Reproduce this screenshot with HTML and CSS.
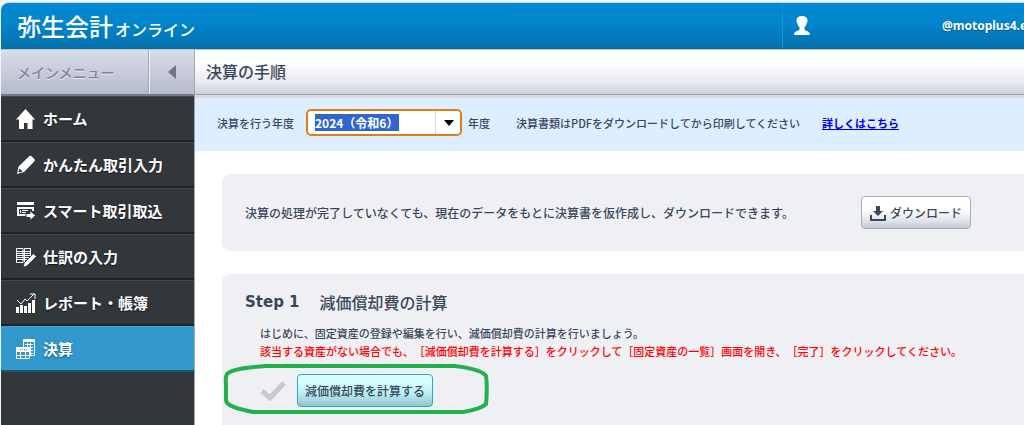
FILE: index.html
```html
<!DOCTYPE html>
<html lang="ja">
<head>
    <meta charset="utf-8">
    <title>弥生会計オンライン</title>
    <link rel="stylesheet" href="styles.css">
</head>
<body>
    <div class="page">
        <header class="header">
            <a href="#" class="logo">弥生会計<span>オンライン</span></a>
            <div class="user">
                <svg class="user-icon" width="16" height="20" viewBox="0 0 16 20">
                    <path d="M8 0c3.500 0 5.500 1.500 5.500 4.500 0 1.500-.2 2-.8 2.500-.2 2-1.200 3.300-2.200 4.300v2.200c.5 1.500 5.500 1.300 5.500 5.500H0c0-4.200 5-4 5.500-5.500v-2.200C4.300 10.300 3.500 9 3.300 7c-.6-.5-.8-1-.8-2.500C2.500 1.500 4.500 0 8 0z" fill="#fff"/>
                </svg>
                <span class="user-name">@motoplus4.e</span>
            </div>
        </header>

        <div class="main">
            <!-- サイドメニュー -->
            <aside class="sidebar">
                <div class="menu-head">
                    <span class="menu-title">メインメニュー</span>
                    <button type="button" class="menu-close" aria-label="メニューを閉じる">
                        <svg width="8" height="14" viewBox="0 0 8 14"><path d="M8 0v14L0 7z" fill="#6d788b"/></svg>
                    </button>
                </div>
                <nav class="menu">
                    <a href="#">
                        <svg width="20" height="20" viewBox="0 0 20 20" fill="#fff"><path d="M9.500 0L0 10.500h3V20h5v-6h3.500v6h5v-9.500H19z"/></svg>
                        ホーム
                    </a>
                    <a href="#">
                        <svg width="20" height="20" viewBox="0 0 20 20">
                            <path d="M1 19l1.500-7.500L13 1.500c1-1 2-.8 3 .2l2 2c1 1 1 2 0 3L8 17z" fill="#fff"/>
                            <path d="M3.500 13.500l3 3-3.300 1-.8-.8z" fill="#32373b"/>
                        </svg>
                        かんたん取引入力
                    </a>
                    <a href="#">
                        <svg width="20" height="20" viewBox="0 0 20 20">
                            <path d="M1 1h17v3H1z" fill="#fff"/>
                            <path d="M17 10V7H2v7h9" fill="none" stroke="#fff" stroke-width="2"/>
                            <path d="M4 9h1v3H4zM6 9h6v1H6zM6 11h4v1H6z" fill="#fff"/>
                            <path d="M10 12.500h4V9.500l5.500 5-5.500 5v-3h-4z" fill="#fff" stroke="#32373b"/>
                        </svg>
                        スマート取引取込
                    </a>
                    <a href="#">
                        <svg width="20" height="20" viewBox="0 0 20 20">
                            <path d="M.5 1.500h6.500v14H.5zM8.500 1.500h6v14h-6z" fill="none" stroke="#fff"/>
                            <path d="M1 4.500h13M1 6.500h13M1 8.500h13M1 10.500h13M1 12.500h13" stroke="#fff"/>
                            <path d="M17.500 6.500l3 3L11 19l-4 1.500 1-4.500z" fill="#fff" stroke="#32373b"/>
                        </svg>
                        仕訳の入力
                    </a>
                    <a href="#">
                        <svg width="20" height="20" viewBox="0 0 20 20">
                            <path d="M0 14h3v6H0zM4 12h3v8H4zM8 13h3v7H8zM12 10h3v10h-3zM16 7h3v13h-3z" fill="#fff"/>
                            <path d="M1 7l4 4 4-5 2 2 7-7M14 1h5v5" fill="none" stroke="#fff"/>
                        </svg>
                        レポート・帳簿
                    </a>
                    <a href="#" class="active">
                        <svg width="20" height="20" viewBox="0 0 20 20">
                            <path d="M7.500.5h11v16h-11z" fill="#3398cc" stroke="#fff"/>
                            <path d="M8 1h10v2H8z" fill="#fff"/>
                            <path d="M9 5.500h8M9 8.500h8M9 11.500h8M9 14.500h8M11.500 4v12M14.500 4v12" stroke="#fff"/>
                            <path d="M.5 8.500h13v11H.5z" fill="#3398cc" stroke="#fff"/>
                            <path d="M0 8h14v5H0z" fill="#fff"/>
                            <path d="M4 10.500h1m1 0h1m1 0h1m1 0h1" stroke="#3398cc"/>
                            <path d="M1 16.500h12M4.500 13v6M9.500 13v6" stroke="#fff"/>
                        </svg>
                        決算
                    </a>
                </nav>
            </aside>

            <!-- コンテンツ -->
            <section class="content">
                <h1>決算の手順</h1>

                <div class="year-bar">
                    <label for="year">決算を行う年度</label>
                    <div class="select-wrap">
                        <select id="year">
                            <option>2024（令和6）</option>
                        </select>
                        <svg class="select-arrow" width="10" height="6" viewBox="0 0 10 6"><path d="M0 0h10L5 6z"/></svg>
                    </div>
                    <span>年度</span>
                    <p>決算書類はPDFをダウンロードしてから印刷してください</p>
                    <a href="#">詳しくはこちら</a>
                </div>

                <div class="card download">
                    <p>決算の処理が完了していなくても、現在のデータをもとに決算書を仮作成し、ダウンロードできます。</p>
                    <button type="button" class="btn">
                        <svg width="16" height="16" viewBox="0 0 16 16" fill="#3b475b"><path d="M6 1h4v5h3l-5 5-5-5h3zM0 10h2v4h12v-4h2v6H0z"/></svg>
                        ダウンロード
                    </button>
                </div>

                <div class="card step">
                    <h2><span>Step 1</span>減価償却費の計算</h2>
                    <p>はじめに、固定資産の登録や編集を行い、減価償却費の計算を行いましょう。</p>
                    <p class="notice">該当する資産がない場合でも、［減価償却費を計算する］をクリックして［固定資産の一覧］画面を開き、［完了］をクリックしてください。</p>
                    <div class="action">
                        <svg width="26" height="20" viewBox="0 0 26 20"><path d="M2 10l8 7L24 2" fill="none" stroke="#c9c9c9" stroke-width="5"/></svg>
                        <button type="button" class="btn btn-calc">減価償却費を計算する</button>
                        <svg class="marker" width="268" height="54" viewBox="0 0 268 54">
                            <path d="M44 4C26 5 8 8 5 12 3 15 4 18 4 24v14c0 6 12 9 27 12h210c12-2 20-5 23-8 1-8 1-22 0-28-3-5-15-8-31-10z" fill="none" stroke="#22b14c" stroke-width="4"/>
                        </svg>
                    </div>
                </div>
            </section>
        </div>
    </div>
</body>
</html>
```
FILE: styles.css
```css
* {
    box-sizing: border-box;
}

body {
    margin: 0;
    background-color: #f3f4f4;
    color: #3b475b;
    font-family: "Noto Sans CJK JP", sans-serif;
    font-size: 12px;
    font-weight: 500;
    line-height: 18px;
    text-spacing-trim: space-all; /* 全角の括弧を詰めない */
    overflow: hidden;
}

h1, h2, p {
    margin: 0;
}

.page {
    display: flex;
    flex-direction: column;
    min-height: 100vh;
    padding: 2px 0 0 1px;
}

/* ヘッダー */
.header {
    display: flex;
    height: 47px;
    border-top: 1px solid #c5d3dc;
    border-bottom: 1px solid #126496;
    border-radius: 8px 0 0 0;
    background: linear-gradient(#018ad3, #0383c9 50%, #0571ad);
}

.logo {
    flex: 1;
    padding-left: 16px;
    color: #fff;
    font-size: 24px;
    line-height: 46px;
    text-decoration: none;
}

.logo span {
    margin-left: 2px;
    font-size: 16px;
}

.user {
    display: flex;
    align-items: center;
    justify-content: space-between;
    width: 242px;
    padding-left: 11px;
    border-left: 1px solid #069cdc;
    overflow: hidden;
}

.user-name {
    width: 82px;
    color: #fff;
    font-family: "Noto Sans", sans-serif;
    font-weight: bold;
    text-shadow: 0 1px 1px #0a527c;
}

.main {
    display: flex;
    flex: 1;
    border-top: 1px solid #b4c6d4;
}

/* サイドメニュー */
.sidebar {
    flex: none;
    width: 194px;
    border-right: 1px solid #a3a5a9;
    background-color: #32373b;
}

.menu-head {
    display: flex;
    height: 46px;
    border-bottom: 2px solid #777b83;
    background: linear-gradient(#d9dde8, #b3bccd);
}

.menu-title {
    flex: 1;
    padding-left: 16px;
    color: #7b869a;
    font-size: 14px;
    line-height: 44px;
    text-shadow: 0 1px 0 #e6eaf1;
}

.menu-close {
    width: 45px;
    padding: 0;
    border: 0;
    border-left: 1px solid #f0f2f6;
    background: none;
    box-shadow: -1px 0 0 #9fa7b6;
}

.menu-close svg {
    display: block;
    margin: 0 auto;
}

.menu a {
    display: flex;
    align-items: center;
    gap: 7px;
    height: 46px;
    padding-left: 15px;
    border-top: 1px solid #43484c;
    border-bottom: 2px solid #1e2123;
    color: #fff;
    font-size: 15px;
    font-weight: bold;
    text-decoration: none;
    text-shadow: 0 1px 1px #15181a;
}

.menu .active {
    border-top-color: #3ba3d7;
    border-bottom-color: #195371;
    background-color: #3398cc;
    text-shadow: 0 1px 2px #15506f;
}

/* コンテンツ */
.content {
    flex: 1;
    min-width: 0;
    background-color: #fff;
}

h1 {
    height: 45px;
    padding-left: 11px;
    border-bottom: 1px solid #9c9da1;
    background: linear-gradient(#fff 30%, #e6e8ef 75%, #cdd0d9);
    font-size: 16px;
    font-weight: 500;
    line-height: 42px;
}

.year-bar {
    display: flex;
    align-items: center;
    height: 56px;
    padding: 0 0 4px 22px;
    border-top: 3px solid #d9dbde;
    background-color: #dceeff;
    font-size: 11px;
    white-space: nowrap;
}

.year-bar p {
    margin: 0 22px 0 26px;
}

.year-bar a {
    color: #0000e6;
    font-weight: bold;
}

.select-wrap {
    position: relative;
    margin: 0 6px 0 12px;
}

select {
    display: block;
    width: 156px;
    height: 27px;
    padding: 0 28px 0 7px;
    border: 2px solid #dc820f;
    border-radius: 5px;
    appearance: none;
    /* 選択中の文字の背景と、矢印の左の区切り線 */
    background:
        linear-gradient(#3366cc, #3366cc) 7px center / 84px 17px no-repeat,
        linear-gradient(#ddd, #ddd) right 24px center / 1px 100% no-repeat,
        #fff;
    color: #fff;
    font-family: inherit;
    font-size: 12px;
    font-weight: bold;
}

.select-arrow {
    position: absolute;
    top: 11px;
    right: 8px;
    pointer-events: none;
}

.card {
    margin: 23px 0 0 27px;
    padding-left: 23px;
    border-radius: 8px 0 0 8px;
    background-color: #eff0f4;
}

.download {
    display: flex;
    align-items: center;
    justify-content: space-between;
    height: 77px;
    padding-right: 53px;
}

.btn {
    display: flex;
    align-items: center;
    justify-content: center;
    gap: 4px;
    height: 33px;
    padding: 0 8px;
    border: 1px solid #a6acb8;
    border-radius: 4px;
    background: linear-gradient(#fff 40%, #e2e5ec 75%, #c3c8d3);
    color: #3b475b;
    font-family: inherit;
    font-size: 12px;
    font-weight: 500;
}

.step {
    min-height: 160px;
    padding-top: 16px;
}

h2 {
    display: flex;
    gap: 20px;
    margin-bottom: 10px;
    font-size: 16px;
    font-weight: 500;
    line-height: 24px;
}

h2 span {
    font-family: "DejaVu Sans", sans-serif;
    font-size: 15px;
    font-weight: bold;
}

.step p {
    padding-left: 15px;
    font-size: 11px;
}

.step .notice {
    color: #f00;
}

.action {
    display: flex;
    align-items: center;
    gap: 11px;
    position: relative;
    margin-top: 14px;
    padding-left: 15px;
}

.btn-calc {
    padding: 0 7px;
    border-color: #24a9d6;
    background: linear-gradient(#d9ffff 20%, #b9edf2 60%, #94c4ce);
}

/* 手書きの囲み */
.marker {
    position: absolute;
    top: -12px;
    left: -23px;
    pointer-events: none;
}
```
